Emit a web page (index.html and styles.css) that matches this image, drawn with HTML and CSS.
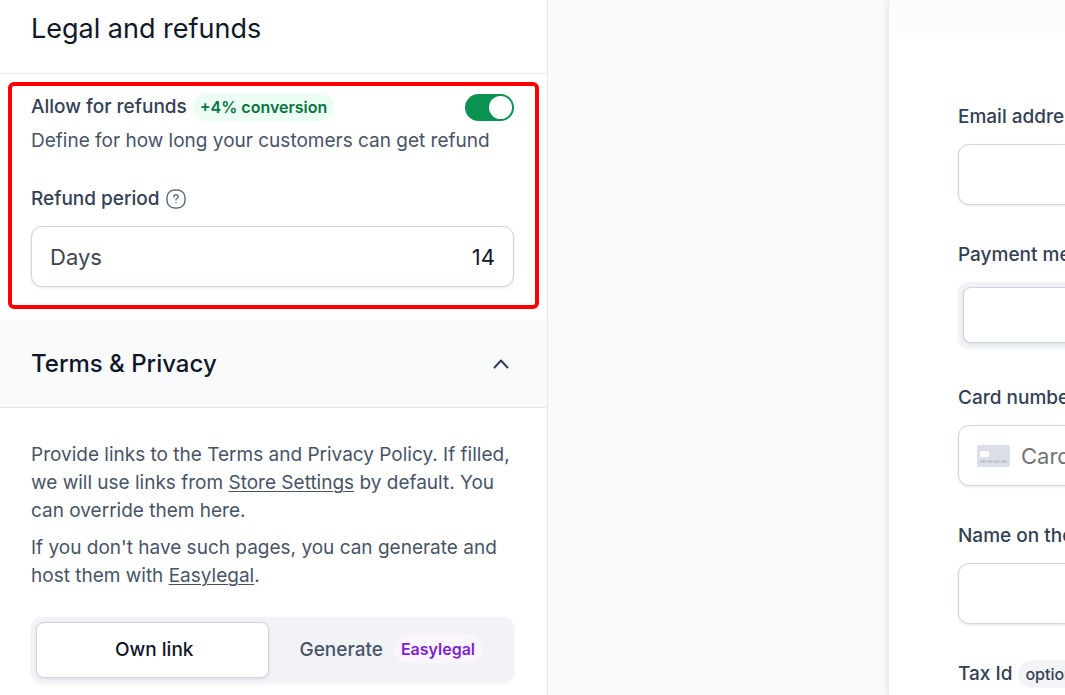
FILE: index.html
```html
<!DOCTYPE html>
<html lang="en">
<head>
    <meta charset="UTF-8">
    <meta name="viewport" content="width=device-width, initial-scale=1.0">
    <title>Legal and refunds</title>
    <link rel="stylesheet" href="styles.css">
</head>
<body>
    <div class="page">
        <main class="settings">
            <header class="settings__header">
                <h1 class="settings__title">Legal and refunds</h1>
            </header>

            <section class="refunds">
                <div class="refunds__head">
                    <label class="label" for="refunds">Allow for refunds</label>
                    <span class="badge badge--green">+4% conversion</span>
                    <input type="checkbox" class="toggle" id="refunds" checked>
                </div>
                <p class="refunds__text">Define for how long your customers can get refund</p>
                <div class="refunds__period">
                    <label class="label" for="period">Refund period</label>
                    <svg class="help" viewBox="0 0 20 20" fill="none" stroke="currentColor" stroke-width="1.5" stroke-linecap="round">
                        <rect x="1" y="1" width="18" height="18" rx="7.5"/>
                        <path d="M7.8 7.8c0-1.3 1-2.1 2.2-2.1s2.2.8 2.2 2c0 1.500-2.200 1.600-2.200 3.200"/>
                        <path d="M10 13.700v.1"/>
                    </svg>
                </div>
                <div class="input-box">
                    <span class="input-box__name">Days</span>
                    <input type="text" class="input-box__field input-box__field--right" id="period" value="14">
                </div>
            </section>

            <section class="terms">
                <button class="terms__head">
                    Terms &amp; Privacy
                    <svg class="chevron" viewBox="0 0 16 10" fill="none" stroke="currentColor" stroke-width="2" stroke-linecap="round" stroke-linejoin="round">
                        <path d="M1.500 8.500 8 1.500l6.500 7"/>
                    </svg>
                </button>
                <div class="terms__body">
                    <p>Provide links to the Terms and Privacy Policy. If filled, we will use links from <a href="#">Store Settings</a> by default. You can override them here.</p>
                    <p>If you don't have such pages, you can generate and host them with <a href="#">Easylegal</a>.</p>
                    <div class="tabs">
                        <button class="tab tab--active">Own link</button>
                        <button class="tab">Generate <span class="badge badge--purple">Easylegal</span></button>
                    </div>
                </div>
            </section>
        </main>

        <div class="preview">
            <div class="preview__bar"></div>
            <form class="form">
                <div class="field">
                    <label class="label" for="email">Email address</label>
                    <div class="input-box">
                        <input type="email" class="input-box__field" id="email">
                    </div>
                </div>
                <div class="field">
                    <span class="label">Payment method</span>
                    <div class="tabs">
                        <button type="button" class="tab tab--active" aria-label="Card"></button>
                    </div>
                </div>
                <div class="field">
                    <label class="label" for="card">Card number</label>
                    <div class="input-box">
                        <svg class="card-icon" viewBox="0 0 33 22">
                            <rect width="33" height="22" rx="2.500" fill="#dcdfe7"/>
                            <rect x="3" y="6" width="9" height="6" rx="1.500" fill="#fff"/>
                            <path d="M4.300 16.500h4M11.200 16.500h3.700M18 16.500h3.700M24.800 16.500h4" stroke="#b6bacb" stroke-width="2" stroke-linecap="round"/>
                        </svg>
                        <input type="text" class="input-box__field" id="card" placeholder="Card number">
                    </div>
                </div>
                <div class="field">
                    <label class="label" for="name">Name on the card</label>
                    <div class="input-box">
                        <input type="text" class="input-box__field" id="name">
                    </div>
                </div>
                <div class="field">
                    <div class="field__head">
                        <label class="label" for="tax">Tax Id</label>
                        <span class="badge">optional</span>
                    </div>
                    <div class="input-box">
                        <input type="text" class="input-box__field" id="tax">
                    </div>
                </div>
            </form>
        </div>
    </div>
</body>
</html>
```
FILE: styles.css
```css
* {
    box-sizing: border-box;
}
body {
    margin: 0;
    font-family: Inter, "Liberation Sans", sans-serif;
    font-size: 19px;
    line-height: 28px;
    color: #475467;
    background-color: #f9fafc;
}
h1, p {
    margin: 0;
}
button, input {
    font-family: inherit;
}
a {
    color: inherit;
    text-decoration-thickness: 1px;
    text-underline-offset: 2px;
}
.page {
    display: grid;
    grid-template-columns: 548fr 341fr 176fr;
    height: 100vh;
    overflow: hidden;
}
.settings {
    background-color: #fff;
    border-right: 1px solid #e6e8ec;
}
.settings__header {
    padding: 13px 31px 28px;
    border-bottom: 1px solid #e9eaeb;
}
.settings__title {
    font-size: 27px;
    line-height: 32px;
    font-weight: 400;
    color: #101828;
}
.label {
    font-size: 19px;
    font-weight: 500;
    color: #344054;
}
.refunds {
    margin: 8px 8px 11px;
    padding: 7px 21px 18px 19px;
    border: 4px solid #ff0000;
    border-radius: 6px;
}
.refunds__head {
    display: flex;
    align-items: center;
    gap: 6px;
    height: 28px;
    margin-bottom: 6px;
}
.refunds__period {
    display: flex;
    align-items: center;
    gap: 6px;
    margin: 30px 0 13px;
}
.badge {
    padding: 0 7px;
    border-radius: 14px;
    font-size: 16px;
    line-height: 28px;
    font-weight: 500;
    color: #344054;
    background-color: #f2f4f7;
}
.badge--green {
    color: #087443;
    background-color: #ecfdf3;
    font-weight: 600;
}
.badge--purple {
    color: #7e22ce;
    background-color: #faf5ff;
    font-weight: 600;
}
.toggle {
    appearance: none;
    display: flex;
    justify-content: flex-end;
    width: 49px;
    height: 27px;
    margin: 0 0 0 auto;
    padding: 2px;
    border-radius: 14px;
    background-color: #099250;
}
.toggle::before {
    content: "";
    width: 23px;
    height: 23px;
    border-radius: 50%;
    background-color: #fff;
}
.help {
    width: 20px;
    height: 20px;
    color: #667085;
}
.input-box {
    display: flex;
    align-items: center;
    gap: 11px;
    height: 61px;
    padding: 0 18px;
    border: 1px solid #d0d3e0;
    border-radius: 11px;
    background-color: #fff;
    box-shadow: 0 1px 3px rgba(16, 24, 40, 0.1);
}
.input-box__name {
    font-size: 22px;
    color: #414651;
}
.input-box__field {
    flex: 1;
    min-width: 0;
    padding: 0;
    border: 0;
    outline: 0;
    background: none;
    font-size: 22px;
    color: #101828;
}
.input-box__field::placeholder {
    color: #757575;
}
.input-box__field--right {
    text-align: right;
}
.card-icon {
    flex: none;
    width: 33px;
    height: 22px;
}
.terms__head {
    display: flex;
    justify-content: space-between;
    align-items: center;
    width: 100%;
    height: 88px;
    padding: 0 38px 0 31px;
    border: 0;
    border-bottom: 1px solid #e6e8ec;
    background-color: #f9fafc;
    font-size: 24px;
    font-weight: 500;
    color: #101828;
}
.chevron {
    width: 16px;
    height: 10px;
    color: #344054;
}
.terms__body {
    padding: 33px 33px 12px 31px;
}
.terms__body p {
    margin-bottom: 9px;
}
.tabs {
    display: flex;
    gap: 8px;
    height: 66px;
    padding: 5px;
    border-radius: 11px;
    background-color: #f2f3f7;
    box-shadow: 0 1px 3px rgba(16, 24, 40, 0.06);
}
.terms__body .tabs {
    margin-top: 27px;
}
.tab {
    flex: 1;
    display: flex;
    justify-content: center;
    align-items: center;
    gap: 11px;
    padding: 0 4px 2px 0;
    border: 1px solid transparent;
    border-radius: 8px;
    background: none;
    font-size: 19px;
    font-weight: 500;
    color: #475467;
}
.tab--active {
    padding: 0 0 2px 4px;
    border-color: #d0d3e0;
    background-color: #fff;
    box-shadow: 0 1px 3px rgba(16, 24, 40, 0.1);
    color: #101828;
}
.preview {
    grid-column: 3;
    min-width: 0;
    overflow: hidden;
    background-color: #fff;
    box-shadow: 0 0 8px rgba(16, 24, 40, 0.14);
}
.preview__bar {
    height: 33px;
    background-color: #fcfcfc;
}
.form {
    display: flex;
    flex-direction: column;
    gap: 34px;
    min-width: 560px;
    padding: 70px 69px;
}
.field {
    display: flex;
    flex-direction: column;
    gap: 13px;
}
.field + .field {
    padding-top: 2px;
}
.field__head {
    display: flex;
    gap: 6px;
}
```
